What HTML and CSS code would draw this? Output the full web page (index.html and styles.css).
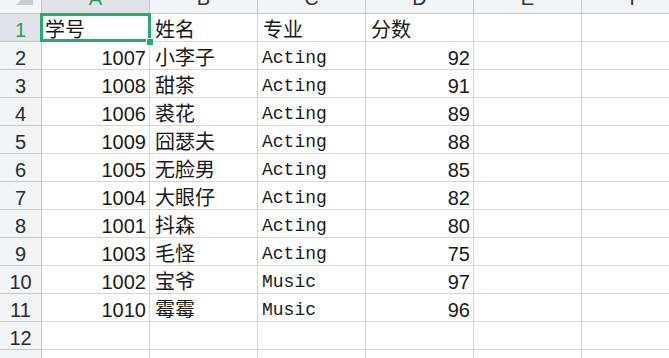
FILE: index.html
```html
<!DOCTYPE html>
<html lang="zh">
<head>
<meta charset="utf-8">
<link rel="stylesheet" href="styles.css">
</head>
<body>
<div class="sheet">
  <div class="corner"><svg class="tri" width="41" height="13" viewBox="0 0 41 13"><polygon points="16,5 33,5 33,-12" fill="#c8cbd0"/></svg></div>
  <div class="ch sel">A</div><div class="ch">B</div><div class="ch">C</div><div class="ch">D</div><div class="ch">E</div><div class="ch">F</div>

  <div class="rh sel">1</div><div class="c a1"><span>学号</span><div class="selbox"></div><div class="handle"></div></div><div class="c">姓名</div><div class="c">专业</div><div class="c">分数</div><div class="c"></div><div class="c"></div>
  <div class="rh">2</div><div class="c n">1007</div><div class="c">小李子</div><div class="c m">Acting</div><div class="c n">92</div><div class="c"></div><div class="c"></div>
  <div class="rh">3</div><div class="c n">1008</div><div class="c">甜茶</div><div class="c m">Acting</div><div class="c n">91</div><div class="c"></div><div class="c"></div>
  <div class="rh">4</div><div class="c n">1006</div><div class="c">裘花</div><div class="c m">Acting</div><div class="c n">89</div><div class="c"></div><div class="c"></div>
  <div class="rh">5</div><div class="c n">1009</div><div class="c">囧瑟夫</div><div class="c m">Acting</div><div class="c n">88</div><div class="c"></div><div class="c"></div>
  <div class="rh">6</div><div class="c n">1005</div><div class="c">无脸男</div><div class="c m">Acting</div><div class="c n">85</div><div class="c"></div><div class="c"></div>
  <div class="rh">7</div><div class="c n">1004</div><div class="c">大眼仔</div><div class="c m">Acting</div><div class="c n">82</div><div class="c"></div><div class="c"></div>
  <div class="rh">8</div><div class="c n">1001</div><div class="c">抖森</div><div class="c m">Acting</div><div class="c n">80</div><div class="c"></div><div class="c"></div>
  <div class="rh">9</div><div class="c n">1003</div><div class="c">毛怪</div><div class="c m">Acting</div><div class="c n">75</div><div class="c"></div><div class="c"></div>
  <div class="rh">10</div><div class="c n">1002</div><div class="c">宝爷</div><div class="c m">Music</div><div class="c n">97</div><div class="c"></div><div class="c"></div>
  <div class="rh">11</div><div class="c n">1010</div><div class="c">霉霉</div><div class="c m">Music</div><div class="c n">96</div><div class="c"></div><div class="c"></div>
  <div class="rh">12</div><div class="c"></div><div class="c"></div><div class="c"></div><div class="c"></div><div class="c"></div><div class="c"></div>
  <div class="rh">13</div><div class="c"></div><div class="c"></div><div class="c"></div><div class="c"></div><div class="c"></div><div class="c"></div>
</div>
</body>
</html>
```

FILE: styles.css
```css
html, body {
  margin: 0;
  padding: 0;
  background: #ffffff;
  overflow: hidden;
}

.sheet {
  display: grid;
  grid-template-columns: 42px repeat(6, 108px);
  grid-template-rows: 14px repeat(13, 28px);
  width: 690px;
  font-family: "Liberation Sans", "Noto Sans CJK SC", sans-serif;
  font-size: 20px;
  color: #1a1a1a;
}

.sheet > div {
  box-sizing: border-box;
  border-right: 1px solid #d3d6dc;
  border-bottom: 1px solid #d3d6dc;
  overflow: hidden;
  white-space: nowrap;
}

.corner {
  background: #f3f4f6;
  border-color: #c3c7ce !important;
}

.tri {
  display: block;
}

.ch {
  background: #f3f4f6;
  border-color: #c3c7ce !important;
  display: flex;
  align-items: flex-end;
  justify-content: center;
  padding-bottom: 5px;
  line-height: 20px;
  color: #333333;
}

.ch.sel {
  background: #e1e3e8;
  color: #1e9e62;
}

.rh {
  background: #f3f4f6;
  border-color: #c3c7ce !important;
  display: flex;
  justify-content: center;
  padding-top: 4px;
  line-height: 24px;
  color: #2b2b2b;
}

.rh.sel {
  background: #e1e3e8;
  color: #1e9e62;
}

.c {
  padding: 4px 4px 0 5px;
  line-height: 24px;
}

.c.n {
  text-align: right;
  padding-right: 3px;
}

.c.m {
  font-family: "Liberation Mono", "Noto Sans CJK SC", monospace;
  font-size: 18px;
  padding-left: 4px;
}

.a1 {
  position: relative;
  overflow: visible !important;
  padding-left: 3px;
}

.selbox {
  position: absolute;
  left: -2px;
  top: -1px;
  width: 111px;
  height: 29px;
  box-sizing: border-box;
  border: 3px solid #1fae6e;
  z-index: 2;
}

.handle {
  position: absolute;
  left: 104px;
  top: 24px;
  width: 6px;
  height: 6px;
  background: #1fae6e;
  border: 1px solid #ffffff;
  z-index: 3;
}
```
